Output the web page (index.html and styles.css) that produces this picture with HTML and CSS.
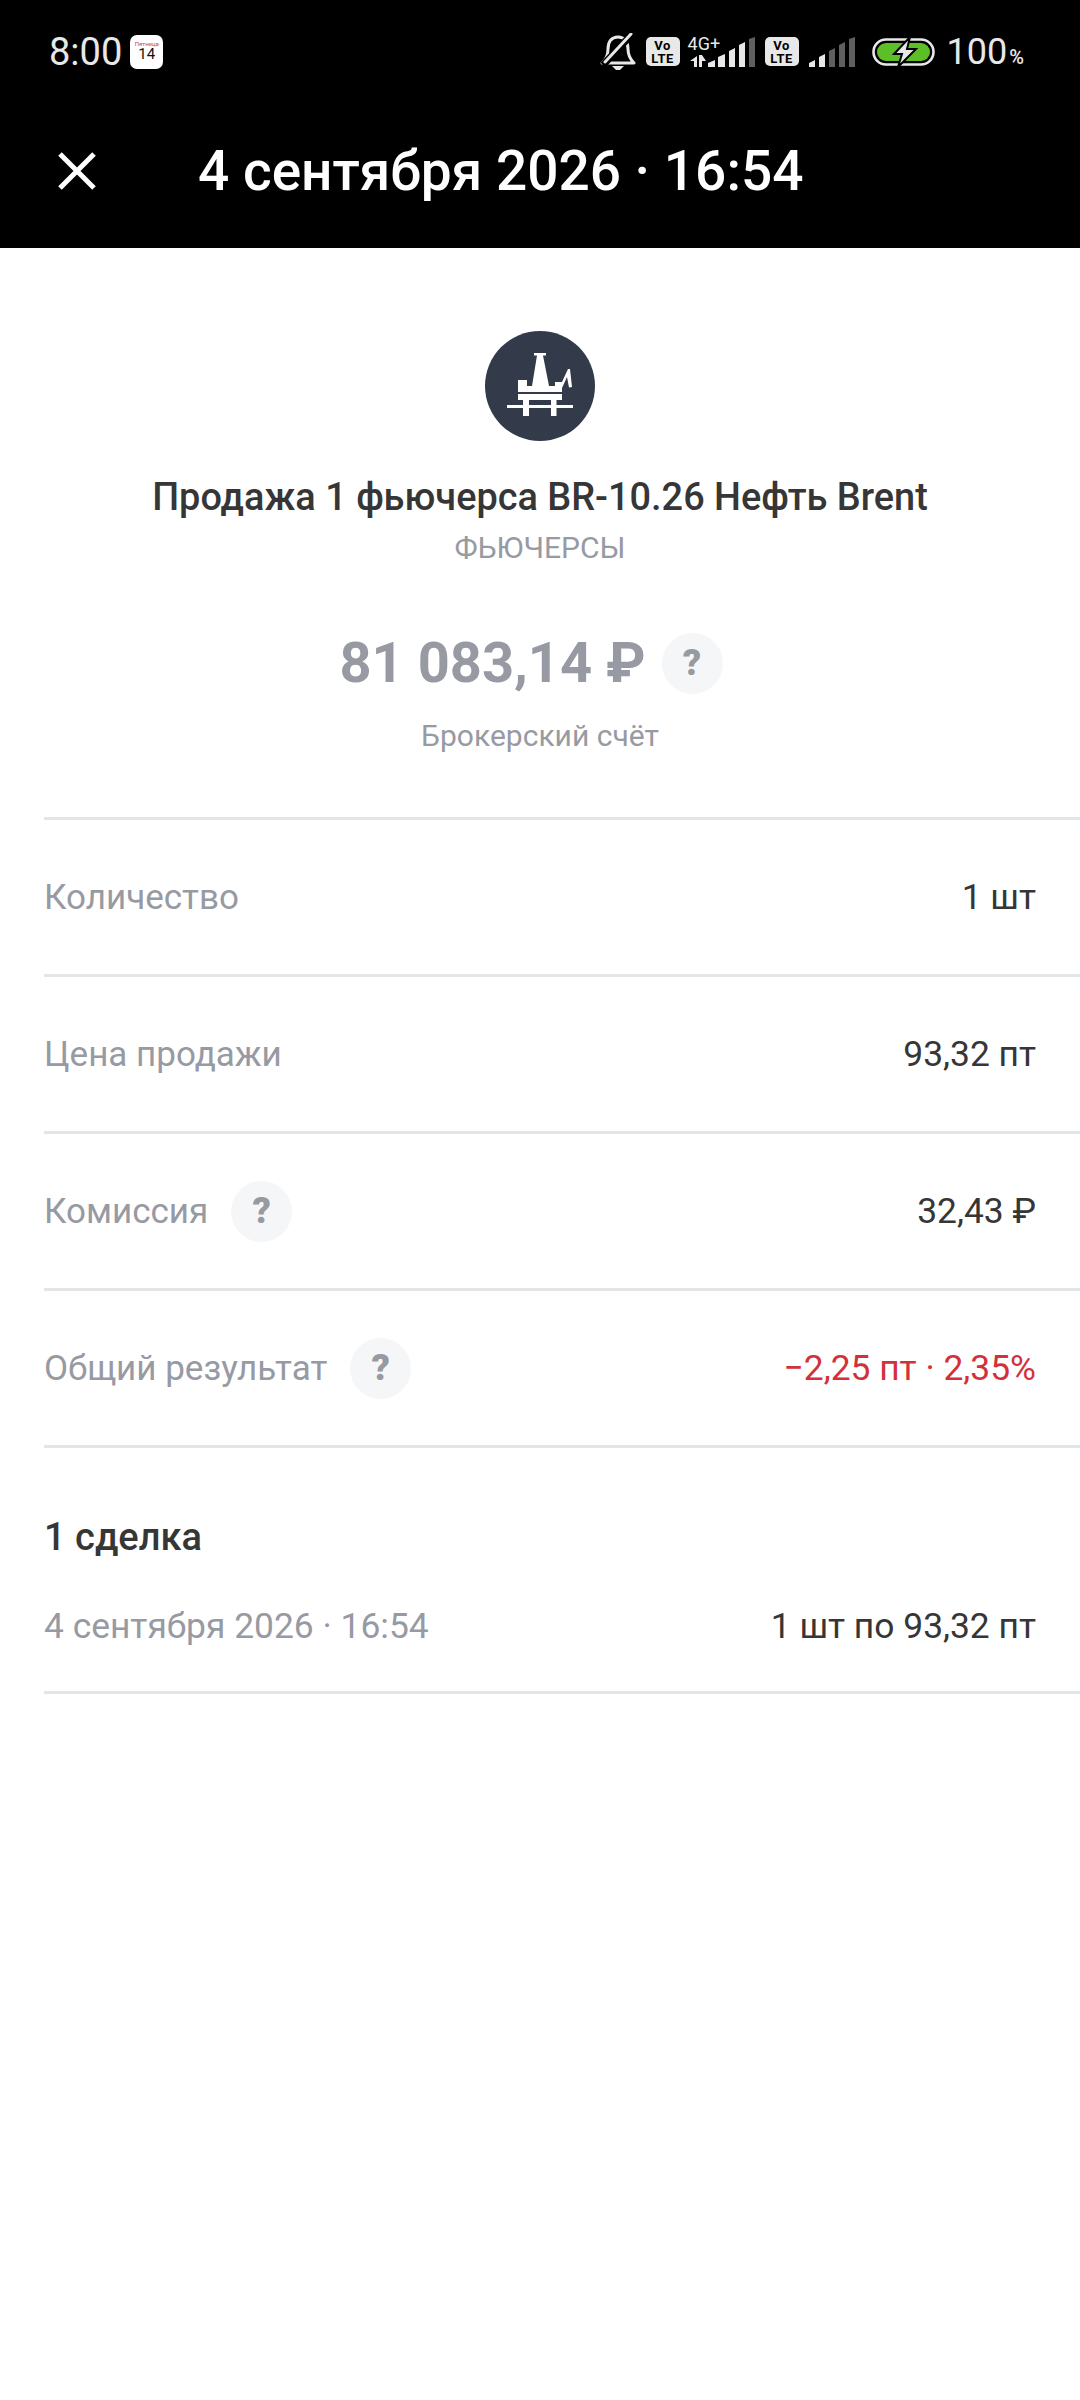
FILE: index.html
```html
<!DOCTYPE html>
<html lang="ru">
<head>
    <meta charset="UTF-8">
    <meta name="viewport" content="width=device-width, initial-scale=1.0">
    <title>Операция</title>
    <link rel="stylesheet" href="styles.css">
</head>
<body>
    <div class="top">
        <div class="status-bar">
            <div class="status-left">
                <span class="clock">8:00</span>
                <div class="calendar">
                    <span class="calendar-day">Пятница</span>
                    <span class="calendar-date">14</span>
                </div>
            </div>
            <div class="status-right">
                <svg class="bell" width="36" height="38" viewBox="0 0 36 38">
                    <path d="M2 30 C7 26 8 22 8 16 C8 8 12 4 18 4 C24 4 28 8 28 16 C28 22 30 26 34 30 Z" fill="none" stroke="#e8e8e8" stroke-width="3" stroke-linejoin="round"/>
                    <path d="M12 33 H24 L20 37 H16 Z" fill="#e8e8e8"/>
                    <path d="M3 32 L32 1" stroke="#000" stroke-width="7"/>
                    <path d="M5 29 L31 1" stroke="#e8e8e8" stroke-width="3" stroke-linecap="round"/>
                </svg>
                <div class="volte"><span>Vo</span><span>LTE</span></div>
                <div class="sim">
                    <span class="net">4G+</span>
                    <svg width="68" height="30" viewBox="0 0 68 30">
                        <path d="M2 24 L9 19 V30 H6 V24 Z M11 18 H14 L18 24 H14 V30 H11 Z" fill="#e8e8e8"/>
                        <path d="M20 26 L27 23 V30 H20 Z M30 20 L37 17 V30 H30 Z M41 14 L47 11 V30 H41 Z M51 8 L57 5 V30 H51 Z" fill="#e8e8e8"/>
                        <path d="M61 2 L67 0 V30 H61 Z" fill="#5f5f5f"/>
                    </svg>
                </div>
                <div class="volte"><span>Vo</span><span>LTE</span></div>
                <svg class="signal" width="48" height="30" viewBox="0 0 48 30">
                    <path d="M1 26 L7 23 V30 H1 Z M11 20 L17 17 V30 H11 Z" fill="#e8e8e8"/>
                    <path d="M21 14 L27 11 V30 H21 Z M31 8 L37 5 V30 H31 Z M41 2 L47 0 V30 H41 Z" fill="#5f5f5f"/>
                </svg>
                <svg class="battery" width="64" height="30" viewBox="0 0 64 30">
                    <rect x="1.500" y="2.500" width="60" height="25" rx="12.500" fill="none" stroke="#e8e8e8" stroke-width="2.600"/>
                    <rect x="5" y="6" width="53" height="18" rx="9" fill="#5cbf27"/>
                    <path d="M38 0 L22 17 H30 L26 30 L44 12 H35 Z" fill="#e8e8e8" stroke="#000" stroke-width="2"/>
                </svg>
                <span class="level">100<small>%</small></span>
            </div>
        </div>
        <div class="toolbar">
            <svg class="close" width="38" height="38" viewBox="0 0 38 38">
                <path d="M2 2 L36 36 M36 2 L2 36" stroke="#fff" stroke-width="5"/>
            </svg>
            <span class="toolbar-title">4 сентября 2026 · 16:54</span>
        </div>
    </div>

    <div class="summary">
        <svg class="logo" width="110" height="110" viewBox="0 0 110 110">
            <circle cx="55" cy="55" r="55" fill="#333a49"/>
            <path d="M49 22 H61 V24.500 H58 L64 55 H70 V51 H77 L83 38 H85 L87 56 L84 56.500 L82 46 L77 57 V61 H33 V49 H42 V55 H47 L52 24.500 H49 Z" fill="#fff"/>
            <path d="M33 63 H77 V69 H71.500 V74 H88 V77 H71.500 V85 H66 V77 H44 V85 H38 V77 H22 V74 H38 V69 H33 Z M44 69 V74 H66 V69 Z" fill="#fff"/>
        </svg>
        <div class="name">Продажа 1 фьючерса BR-10.26 Нефть Brent</div>
        <div class="kind">ФЬЮЧЕРСЫ</div>
        <div class="amount-line">
            <span class="amount">81 083,14 ₽</span>
            <span class="help">?</span>
        </div>
        <div class="account">Брокерский счёт</div>
    </div>

    <div class="rows">
        <div class="row">
            <span class="label">Количество</span>
            <span class="value">1 шт</span>
        </div>
        <div class="row">
            <span class="label">Цена продажи</span>
            <span class="value">93,32 пт</span>
        </div>
        <div class="row">
            <span class="label with-help">Комиссия<span class="help">?</span></span>
            <span class="value">32,43 ₽</span>
        </div>
        <div class="row">
            <span class="label with-help">Общий результат<span class="help">?</span></span>
            <span class="value loss">−2,25 пт · 2,35%</span>
        </div>
    </div>

    <div class="deals">
        <div class="deals-title">1 сделка</div>
        <div class="deal">
            <span class="label">4 сентября 2026 · 16:54</span>
            <span class="value">1 шт по 93,32 пт</span>
        </div>
    </div>
</body>
</html>
```

FILE: styles.css
```css
body {
    margin: 0;
    padding: 0;
    width: 1080px;
    height: 2400px;
    background-color: #ffffff;
    font-family: Roboto, "Liberation Sans", sans-serif;
    color: #363636;
    overflow: hidden;
}

.top {
    background-color: #000000;
    height: 248px;
}

.status-bar {
    height: 103px;
    padding: 0 56px 0 49px;
    display: flex;
    justify-content: space-between;
    align-items: center;
}

.status-left {
    display: flex;
    align-items: center;
    gap: 8px;
}

.clock {
    font-size: 38px;
    color: #e8e8e8;
}

.calendar {
    width: 33px;
    height: 34px;
    background-color: #ffffff;
    border-radius: 7px;
    display: flex;
    flex-direction: column;
    align-items: center;
    justify-content: center;
    line-height: 1;
}

.calendar-day {
    font-size: 6px;
    color: #c9424f;
}

.calendar-date {
    font-size: 15px;
    color: #111111;
}

.status-right {
    display: flex;
    align-items: center;
}

.volte {
    width: 34px;
    height: 29px;
    background-color: #e8e8e8;
    border-radius: 5px;
    margin-left: 10px;
    display: flex;
    flex-direction: column;
    align-items: center;
    justify-content: center;
    color: #000000;
    font-size: 13px;
    font-weight: 700;
    line-height: 13px;
    letter-spacing: 0.5px;
}

.sim {
    position: relative;
    margin-left: 8px;
    width: 68px;
    height: 30px;
    margin-right: -1px;
}

.net {
    position: absolute;
    left: 0;
    top: -1px;
    font-size: 18px;
    line-height: 15px;
    color: #e8e8e8;
}

.signal {
    margin-left: 9px;
}

.battery {
    margin-left: 16px;
}

.level {
    margin-left: 11px;
    font-size: 36px;
    color: #e8e8e8;
}

.level small {
    margin-left: 2px;
    font-size: 20px;
    font-weight: 500;
}

.toolbar {
    height: 136px;
    padding-left: 58px;
    display: flex;
    align-items: center;
    gap: 102px;
}

.toolbar-title {
    font-size: 55px;
    font-weight: 500;
    color: #ffffff;
}

.summary {
    padding-top: 83px;
    box-sizing: border-box;
    height: 572px;
    display: flex;
    flex-direction: column;
    align-items: center;
    border-bottom: 3px solid #e3e5e7;
    margin-left: 44px;
    padding-right: 44px;
}

.name {
    margin-top: 34px;
    font-size: 37.900px;
    line-height: 44px;
    font-weight: 500;
}

.kind {
    margin-top: 9px;
    font-size: 30px;
    line-height: 40px;
    color: #979aa2;
}

.amount-line {
    margin-top: 62px;
    margin-right: 18px;
    display: flex;
    align-items: center;
    gap: 16px;
}

.amount {
    font-size: 56px;
    font-weight: 700;
    color: #979aa2;
}

.account {
    margin-top: 20px;
    font-size: 30px;
    line-height: 40px;
    color: #979aa2;
}

.help {
    display: inline-flex;
    width: 61px;
    height: 61px;
    border-radius: 50%;
    background-color: #f5f6f7;
    align-items: center;
    justify-content: center;
    font-size: 36px;
    font-weight: 900;
    color: #979aa2;
}

.row {
    height: 154px;
    margin-left: 44px;
    padding-right: 44px;
    border-bottom: 3px solid #e3e5e7;
    display: flex;
    justify-content: space-between;
    align-items: center;
}

.label {
    font-size: 35.400px;
    color: #979aa2;
}

.row .label {
    font-size: 35px;
}

.with-help {
    display: flex;
    align-items: center;
    gap: 23px;
}

.value {
    font-size: 35.400px;
    color: #363636;
}

.loss {
    color: #d2313a;
}

.deals {
    margin-left: 44px;
    padding-right: 44px;
    height: 246px;
    box-sizing: border-box;
    border-bottom: 3px solid #e3e5e7;
    padding-top: 67px;
}

.deals-title {
    font-size: 38px;
    line-height: 44px;
    font-weight: 500;
}

.deal {
    margin-top: 46px;
    display: flex;
    justify-content: space-between;
    align-items: center;
}
```
